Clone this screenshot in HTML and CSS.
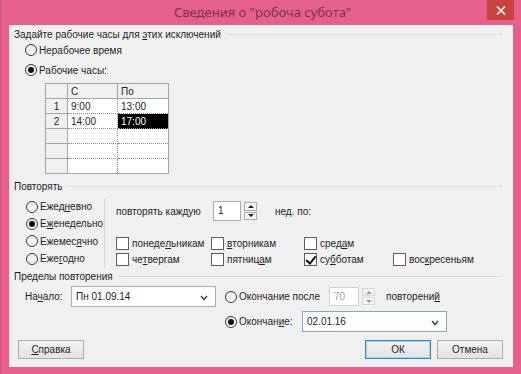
FILE: index.html
```html
<!DOCTYPE html>
<html lang="ru">

<head>
    <meta charset="UTF-8">
    <meta name="viewport" content="width=device-width, initial-scale=1.0">
    <title>Сведения о "робоча субота"</title>
    <link rel="stylesheet" href="styles.css">
</head>

<body>
    <div class="window">
        <div class="titlebar">
            <span class="title">Сведения о "робоча субота"</span>
            <span class="close">
                <svg width="10" height="9" viewBox="0 0 10 9"><path d="M1 0.5 L9 8.5 M9 0.5 L1 8.5" stroke="#fff" stroke-width="1.6"/></svg>
            </span>
        </div>

        <div class="client">
            <div class="group-head"><span>Задайте рабочие часы для <u>э</u>тих исключений</span></div>
            <div class="hours">
                <div class="opt"><span class="radio"></span>Нерабочее время</div>
                <div class="opt second"><span class="radio on"></span>Рабочие часы:</div>
                <table class="grid">
                    <tr class="head"><td class="num"></td><td>С</td><td>По</td></tr>
                    <tr><td class="num">1</td><td>9:00</td><td>13:00</td></tr>
                    <tr><td class="num">2</td><td>14:00</td><td class="sel">17:00</td></tr>
                    <tr><td class="num"></td><td></td><td></td></tr>
                    <tr><td class="num"></td><td></td><td></td></tr>
                    <tr><td class="num"></td><td></td><td></td></tr>
                </table>
            </div>

            <div class="group-head"><span>Повторять</span></div>
            <div class="repeat">
                <div class="freq">
                    <div class="opt"><span class="radio"></span>Ежед<u>н</u>евно</div>
                    <div class="opt"><span class="radio on"></span>Е<u>ж</u>енедельно</div>
                    <div class="opt"><span class="radio"></span>Ежемес<u>я</u>чно</div>
                    <div class="opt"><span class="radio"></span>Еже<u>г</u>одно</div>
                </div>
                <div class="weekly">
                    <div class="every">
                        <span class="every-label">повторять каждую</span>
                        <span class="field small">1</span>
                        <span class="spin">
                            <span class="up"></span>
                            <span class="down"></span>
                        </span>
                        <span class="unit">нед. по:</span>
                    </div>
                    <div class="days">
                        <div class="check"><span class="box"></span>понеде<u>л</u>ьникам</div>
                        <div class="check"><span class="box"></span><u>в</u>торникам</div>
                        <div class="check"><span class="box"></span>сред<u>а</u>м</div>
                        <div></div>
                        <div class="check"><span class="box"></span>че<u>т</u>вергам</div>
                        <div class="check"><span class="box"></span>пятниц<u>а</u>м</div>
                        <div class="check"><span class="box on"></span>су<u>б</u>ботам</div>
                        <div class="check"><span class="box"></span>вос<u>к</u>ресеньям</div>
                    </div>
                </div>
            </div>

            <div class="group-head"><span>Пределы повторения</span></div>
            <div class="range">
                <div class="range-row">
                    <span class="start-label">На<u>ч</u>ало:</span>
                    <span class="combo">Пн 01.09.14
                        <svg class="chev" width="8" height="6" viewBox="0 0 8 6"><path d="M1 1 L4 4.5 L7 1" fill="none" stroke="#444" stroke-width="1.5"/></svg>
                    </span>
                    <span class="opt after"><span class="radio"></span>Окончание после</span>
                    <span class="field small off">70</span>
                    <span class="spin off">
                        <span class="up"></span>
                        <span class="down"></span>
                    </span>
                    <span class="unit2">повторени<u>й</u></span>
                </div>
                <div class="range-row end">
                    <span class="opt until"><span class="radio on"></span>Окончан<u>и</u>е:</span>
                    <span class="combo focus">02.01.16
                        <svg class="chev" width="8" height="6" viewBox="0 0 8 6"><path d="M1 1 L4 4.5 L7 1" fill="none" stroke="#444" stroke-width="1.5"/></svg>
                    </span>
                </div>
            </div>

            <div class="buttons">
                <span class="btn"><u>С</u>правка</span>
                <span class="fill"></span>
                <span class="btn default">ОК</span>
                <span class="btn">Отмена</span>
            </div>
        </div>
    </div>
</body>

</html>
```

FILE: styles.css
```css
* {
    padding: 0;
    margin: 0;
    box-sizing: border-box;
}

body {
    width: 521px;
    height: 374px;
    background-color: #e6608d;
    font-family: "Liberation Sans", Arial, sans-serif;
    font-size: 10px;
    color: #1e1e1e;
    overflow: hidden;
}

u {
    text-decoration: underline;
    text-underline-offset: 1px;
}

.window {
    height: 374px;
    border-left: 1px solid #c9517a;
    display: flex;
    flex-direction: column;
}

.titlebar {
    height: 25px;
    display: flex;
    justify-content: center;
    align-items: center;
    position: relative;
}

.title {
    font-family: "Noto Sans", sans-serif;
    font-size: 13px;
    color: #7e3050;
    margin-top: -1px;
    margin-left: 3px;
}

.close {
    position: absolute;
    top: 0;
    right: 7px;
    width: 27px;
    height: 20px;
    background-color: #c8423f;
    display: flex;
    justify-content: center;
    align-items: center;
}

.client {
    margin: 0 8px 0 8px;
    height: 342px;
    background-color: #f0f0f0;
    padding: 3px 10px 0 5px;
}

/* group caption with line */
.group-head {
    height: 14px;
    line-height: 14px;
    display: flex;
    align-items: center;
}

.group-head::after {
    content: "";
    flex: 1;
    margin-left: 5px;
    border-top: 1px solid #dcdcdc;
    margin-top: -1px;
}

.opt {
    height: 16px;
    display: flex;
    align-items: center;
    white-space: nowrap;
}

.radio {
    width: 12px;
    height: 12px;
    border: 1px solid #3c3c3c;
    border-radius: 50%;
    background: linear-gradient(#e6e6e6, #ffffff);
    margin-right: 2px;
    display: flex;
    justify-content: center;
    align-items: center;
    flex-shrink: 0;
}

.radio.on::after {
    content: "";
    width: 6px;
    height: 6px;
    border-radius: 50%;
    background-color: #111;
}

.hours {
    padding-left: 11px;
}

.hours .second {
    margin-top: 4px;
}

.grid {
    margin: 5px 0 0 20px;
    border-collapse: collapse;
    border: 1px solid #a6a6a6;
}

.grid td {
    height: 15px;
    padding: 0 0 0 3px;
    line-height: 13px;
    background-color: #fff;
    border: 1px dotted #8c8c8c;
    width: 50px;
}

.grid td:last-child {
    width: 51px;
}

.grid .head td {
    background-color: #f0f0f0;
    border: 1px solid #a6a6a6;
}

.grid td.num {
    width: 22px;
    background-color: #f0f0f0;
    border: 1px solid #a6a6a6;
    text-align: center;
    padding: 0;
}

.grid td.sel {
    background-color: #000;
    color: #fff;
}

.hours + .group-head {
    margin-top: 6px;
}

/* repeat block */
.repeat {
    display: flex;
    margin-top: 4px;
    margin-left: -5px;
    height: 70px;
}

.freq {
    width: 96px;
    border-right: 1px solid #d6d6d6;
    padding-left: 17px;
}

.freq .opt {
    height: 17.3px;
}

.weekly {
    padding-left: 11px;
}

.every {
    display: flex;
    align-items: center;
    height: 20px;
    margin-top: 3px;
}

.every-label {
    width: 97px;
}

.field {
    background-color: #fff;
    border: 1px solid #ababab;
    height: 20px;
    line-height: 18px;
    padding-left: 4px;
}

.field.small {
    width: 28px;
}

.field.off {
    color: #a0a0a0;
    border-color: #d2d2d2;
}

.spin {
    width: 13px;
    height: 20px;
    margin-left: 3px;
    display: flex;
    flex-direction: column;
    gap: 1px;
    padding: 1px 0;
}

.spin span {
    flex: 1;
    border: 1px solid #ababab;
    background-color: #f4f4f4;
    display: flex;
    justify-content: center;
    align-items: center;
}

.spin .up::after {
    content: "";
    border-left: 3px solid transparent;
    border-right: 3px solid transparent;
    border-bottom: 3px solid #222;
}

.spin .down::after {
    content: "";
    border-left: 3px solid transparent;
    border-right: 3px solid transparent;
    border-top: 3px solid #222;
}

.spin.off span {
    border-color: #d6d6d6;
}

.spin.off .up::after {
    border-bottom-color: #9a9a9a;
}

.spin.off .down::after {
    border-top-color: #9a9a9a;
}

.unit {
    margin-left: 18px;
}

.days {
    margin-top: 14px;
    display: grid;
    grid-template-columns: 95px 93px 89px auto;
    grid-auto-rows: 16px;
}

.check {
    display: flex;
    align-items: center;
    white-space: nowrap;
}

.box {
    width: 13px;
    height: 13px;
    border: 1px solid #5e5e5e;
    background-color: #fff;
    margin-right: 3px;
    position: relative;
    flex-shrink: 0;
}

.box.on::after {
    content: "";
    position: absolute;
    left: 3px;
    top: 0px;
    width: 4px;
    height: 8px;
    border-right: 2px solid #111;
    border-bottom: 2px solid #111;
    transform: rotate(40deg);
}

/* range block */
.range {
    margin-top: 2px;
}

.repeat + .group-head {
    margin-top: 2px;
}

.range-row {
    display: flex;
    align-items: center;
    height: 21px;
}

.range-row.end {
    margin-top: 4px;
    padding-left: 211px;
}

.start-label {
    width: 46px;
    margin-left: 11px;
}

.combo {
    width: 145px;
    height: 21px;
    background-color: #fff;
    border: 1px solid #ababab;
    display: flex;
    align-items: center;
    justify-content: space-between;
    padding: 0 7px 0 4px;
}

.combo.focus {
    border-color: #7aa7dc;
}

.chev {
    margin-top: 2px;
}

.opt.after {
    margin-left: 9px;
    width: 104px;
}

.opt.until {
    width: 77px;
}

.range-row .field {
    height: 19px;
    line-height: 17px;
    width: 30px;
}

.range-row .spin {
    height: 19px;
}

.unit2 {
    margin-left: 11px;
}

/* bottom buttons */
.buttons {
    display: flex;
    margin-top: 8px;
    padding-left: 4px;
}

.fill {
    flex: 1;
}

.btn {
    width: 66px;
    height: 19px;
    border: 1px solid #acacac;
    background: linear-gradient(#f2f2f2, #e3e3e3);
    display: flex;
    justify-content: center;
    align-items: center;
    margin-left: 6px;
}

.btn:first-child {
    margin-left: 0;
}

.btn.default {
    border-color: #3c7fb1;
    box-shadow: inset 0 0 0 1px #a9d4f2;
}
```
